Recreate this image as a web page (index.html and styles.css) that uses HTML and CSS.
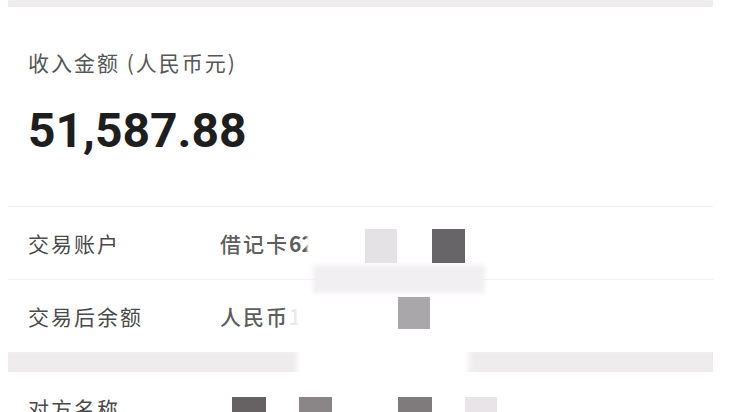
FILE: index.html
```html
<!DOCTYPE html>
<html lang="zh-CN">
<head>
<meta charset="utf-8">
<title>收入详情</title>
<link rel="stylesheet" href="styles.css">
</head>
<body>
<div class="page">
  <div class="band band-top"></div>
  <section class="summary">
    <div class="summary-label">收入金额 (人民币元)</div>
    <div class="summary-amount">51,587.88</div>
  </section>
  <div class="row">
    <span class="row-label">交易账户</span>
    <span class="row-value">借记卡<span class="digits">62</span></span>
  </div>
  <div class="row">
    <span class="row-label">交易后余额</span>
    <span class="row-value">人民币<span class="faint">1</span></span>
  </div>
  <div class="band band-mid"></div>
  <div class="row row-last">
    <span class="row-label">对方名称</span>
    <span class="row-value"></span>
  </div>

  <div class="mask mask-top"></div>
  <div class="mask mask-white"></div>
  <div class="mask mask-pink"></div>
  <div class="px px-a"></div>
  <div class="px px-b"></div>
  <div class="px px-c"></div>
  <div class="px px-d"></div>
  <div class="px px-e"></div>
  <div class="px px-f"></div>
  <div class="px px-g"></div>
</div>
</body>
</html>
```
FILE: styles.css
```css
html, body {
  margin: 0;
  padding: 0;
  background: #ffffff;
}
body {
  width: 731px;
  height: 412px;
  overflow: hidden;
  font-family: "Noto Sans CJK SC", "Noto Sans", sans-serif;
}
.page {
  position: relative;
  margin-left: 8px;
  width: 705px;
  display: flex;
  flex-direction: column;
}
.band {
  background: #eeeced;
}
.band-top {
  height: 7px;
}
.band-mid {
  height: 19px;
}
.summary {
  display: flex;
  flex-direction: column;
  padding: 41px 0 46px 20px;
  border-bottom: 1px solid #efefef;
}
.summary-label {
  font-size: 21px;
  line-height: 28px;
  letter-spacing: 2px;
  color: #555555;
}
.summary-amount {
  margin-top: 25px;
  font-family: Roboto, "Liberation Sans", sans-serif;
  font-weight: 700;
  font-size: 48px;
  line-height: 59px;
  color: #1e1e1e;
}
.row {
  display: flex;
  align-items: center;
  height: 72px;
  padding-left: 20px;
  border-bottom: 1px solid #efefef;
  font-size: 21px;
  letter-spacing: 2px;
}
.row-last {
  border-bottom: none;
}
.row-label {
  width: 192px;
  color: #4a4a4a;
}
.row-value {
  color: #5e5e5e;
  font-weight: 500;
}
.digits {
  font-weight: 700;
  letter-spacing: 0;
}
.faint {
  color: #e2e2e2;
}
.mask {
  position: absolute;
  background: #ffffff;
}
.mask-top {
  left: 299px;
  top: 216px;
  width: 165px;
  height: 52px;
  filter: blur(1px);
}
.mask-white {
  left: 289px;
  top: 284px;
  width: 172px;
  height: 112px;
  filter: blur(3px);
}
.mask-pink {
  left: 305px;
  top: 265px;
  width: 172px;
  height: 28px;
  background: #f1eff1;
  filter: blur(2px);
}
.px {
  position: absolute;
}
.px-a { left: 357px; top: 229px; width: 32px; height: 34px; background: #e4e2e5; }
.px-b { left: 424px; top: 229px; width: 33px; height: 34px; background: #676567; }
.px-c { left: 390px; top: 297px; width: 32px; height: 32px; background: #a9a7a9; }
.px-d { left: 224px; top: 397px; width: 34px; height: 20px; background: #666264; }
.px-e { left: 291px; top: 397px; width: 33px; height: 20px; background: #8a8688; }
.px-f { left: 390px; top: 397px; width: 34px; height: 20px; background: #7f7b7d; }
.px-g { left: 457px; top: 397px; width: 32px; height: 20px; background: #e8e4e8; }
```
